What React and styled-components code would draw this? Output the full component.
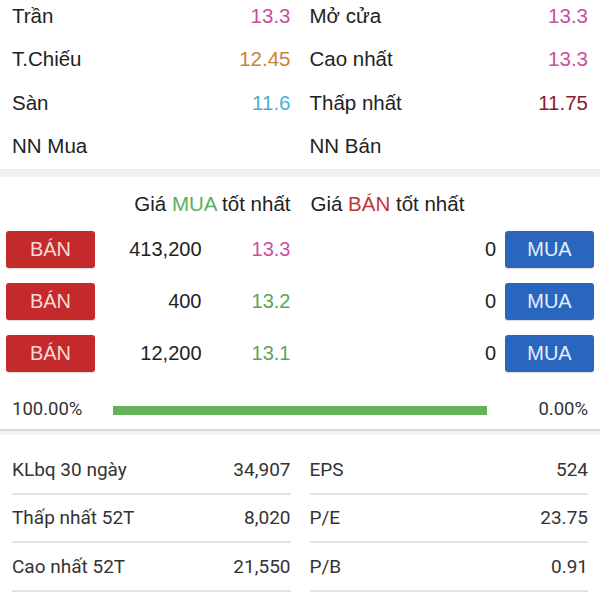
import React from 'react'
import styled, { createGlobalStyle } from "styled-components";

const GlobalStyle = createGlobalStyle`
  html, body {
    margin: 0;
    padding: 0;
    background: #fff;
    overflow: hidden;
  }
  body {
    font-family: "Liberation Sans", Arial, sans-serif;
    color: #222;
  }
`;

const quote = [
  [{ label: "Trần", value: "13.3", color: "#c9509e" }, { label: "Mở cửa", value: "13.3", color: "#c9509e" }],
  [{ label: "T.Chiếu", value: "12.45", color: "#c8843c" }, { label: "Cao nhất", value: "13.3", color: "#c9509e" }],
  [{ label: "Sàn", value: "11.6", color: "#4aaed4" }, { label: "Thấp nhất", value: "11.75", color: "#8a1c2c" }],
  [{ label: "NN Mua", value: "" }, { label: "NN Bán", value: "" }],
];

const bids = [
  { qty: "413,200", price: "13.3", color: "#c9509e" },
  { qty: "400", price: "13.2", color: "#5aa55a" },
  { qty: "12,200", price: "13.1", color: "#5aa55a" },
];

const stats = [
  ["KLbq 30 ngày", "34,907", "EPS", "524"],
  ["Thấp nhất 52T", "8,020", "P/E", "23.75"],
  ["Cao nhất 52T", "21,550", "P/B", "0.91"],
];

const App = () => {
  return (
    <Page>
      <GlobalStyle />
      <QuoteGrid>
        {quote.map((row) =>
          row.map((cell) => (
            <QuoteRow key={cell.label}>
              <span>{cell.label}</span>
              <QuoteValue $color={cell.color}>{cell.value}</QuoteValue>
            </QuoteRow>
          ))
        )}
      </QuoteGrid>
      <Band />

      <OrderBook>
        <BidHeader>
          Giá <Word $color="#5cae5c">MUA</Word> tốt nhất
        </BidHeader>
        <AskHeader>
          Giá <Word $color="#c0353a">BÁN</Word> tốt nhất
        </AskHeader>
        {bids.map((b, i) => (
          <React.Fragment key={i}>
            <BidRow>
              <ActionButton $kind="sell">BÁN</ActionButton>
              <Qty>{b.qty}</Qty>
              <Price $color={b.color}>{b.price}</Price>
            </BidRow>
            <AskRow>
              <Price />
              <Qty>0</Qty>
              <ActionButton $kind="buy">MUA</ActionButton>
            </AskRow>
          </React.Fragment>
        ))}
      </OrderBook>

      <RatioRow>
        <span>100.00%</span>
        <Track>
          <Fill style={{ width: "100%" }} />
        </Track>
        <RightText>0.00%</RightText>
      </RatioRow>
      <Divider />

      <StatsGrid>
        {stats.map((s) => (
          <React.Fragment key={s[0]}>
            <StatRow>
              <span>{s[0]}</span>
              <span>{s[1]}</span>
            </StatRow>
            <StatRow>
              <span>{s[2]}</span>
              <span>{s[3]}</span>
            </StatRow>
          </React.Fragment>
        ))}
      </StatsGrid>
    </Page>
  );
}

const Page = styled.div`
  width: 600px;
  height: 600px;
  overflow: hidden;
`;

const QuoteGrid = styled.div`
  display: grid;
  grid-template-columns: 1fr 1fr;
  column-gap: 19px;
  padding: 0 12px;
  margin-top: -6px;
`;

const QuoteRow = styled.div`
  height: 43.5px;
  display: flex;
  align-items: center;
  justify-content: space-between;
  font-size: 20.5px;
  color: #222;
`;

const QuoteValue = styled.span`
  color: ${(p) => p.$color || "#222"};
`;

const Band = styled.div`
  margin-top: 1px;
  height: 7px;
  background: #f1f1f1;
  border-top: 1px solid #e9e9e9;
`;

const OrderBook = styled.div`
  display: grid;
  grid-template-columns: 1fr 1fr;
  column-gap: 19px;
  row-gap: 15px;
  padding: 15px 6px 0;
  font-size: 20px;
`;

const BidHeader = styled.div`
  text-align: right;
  line-height: 24px;
  font-size: 20.5px;
  color: #222;
`;

const AskHeader = styled.div`
  padding-left: 1px;
  line-height: 24px;
  font-size: 20.5px;
  color: #222;
`;

const Word = styled.span`
  color: ${(p) => p.$color};
`;

const BidRow = styled.div`
  display: grid;
  grid-template-columns: 89px 1fr 89px;
  align-items: center;
  height: 37px;
`;

const AskRow = styled.div`
  display: grid;
  grid-template-columns: 1fr auto 89px;
  column-gap: 9px;
  align-items: center;
  height: 37px;
`;

const ActionButton = styled.div`
  height: 37px;
  border-radius: 3px;
  display: flex;
  align-items: center;
  justify-content: center;
  font-size: 20px;
  background: ${(p) => (p.$kind === "sell" ? "#c4292b" : "#2b66be")};
  color: ${(p) => (p.$kind === "sell" ? "#f7dcd6" : "#e3eeff")};
  box-shadow: 0 1px 1px rgba(0, 0, 0, 0.15);
`;

const Qty = styled.span`
  text-align: right;
  color: #222;
`;

const Price = styled.span`
  text-align: right;
  color: ${(p) => p.$color || "#222"};
`;

const RatioRow = styled.div`
  display: grid;
  grid-template-columns: 101px 1fr 101px;
  align-items: center;
  height: 24px;
  padding: 0 12px;
  margin-top: 25px;
  font-family: Roboto, "Liberation Sans", sans-serif;
  font-size: 18.5px;
  color: #333;
`;

const RightText = styled.span`
  text-align: right;
`;

const Track = styled.div`
  height: 9px;
  background: #e6e6e6;
  margin-top: 2px;
`;

const Fill = styled.div`
  height: 100%;
  background: #64b257;
`;

const Divider = styled.div`
  margin-top: 8px;
  height: 4px;
  border-top: 2px solid #d6d6d6;
  background: #f4f4f4;
`;

const StatsGrid = styled.div`
  display: grid;
  grid-template-columns: 1fr 1fr;
  column-gap: 19px;
  padding: 11px 12px 0;
`;

const StatRow = styled.div`
  height: 46.5px;
  display: flex;
  align-items: center;
  justify-content: space-between;
  border-bottom: 2px solid #e3e3e3;
  font-family: Roboto, "Liberation Sans", sans-serif;
  font-size: 19px;
  color: #333;
`;

export default App
